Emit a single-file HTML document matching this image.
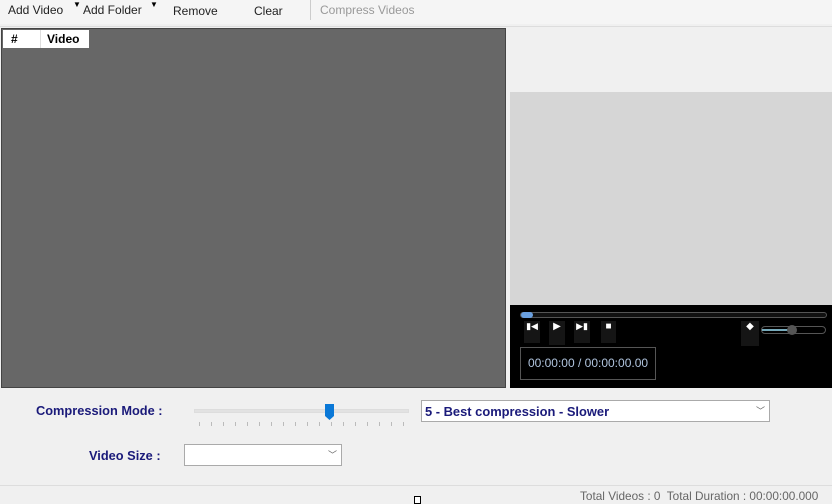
<!DOCTYPE html>
<html><head><meta charset="utf-8"><style>
*{margin:0;padding:0;box-sizing:border-box}
body{width:832px;height:504px;background:#f0f0f0;font-family:"Liberation Sans",sans-serif;position:relative;overflow:hidden;font-size:12px}
.a{position:absolute}
.tb{font-size:12px;color:#222;top:3px}
</style></head><body>
<div class="a" style="left:0;top:0;width:832px;height:24px;background:#f5f5f5"></div>
<div class="a tb" style="left:8px">Add Video</div>
<div class="a" style="left:73px;top:0;font-size:8px">▼</div>
<div class="a tb" style="left:83px">Add Folder</div>
<div class="a" style="left:150px;top:0;font-size:8px">▼</div>
<div class="a tb" style="left:173px;top:4px">Remove</div>
<div class="a tb" style="left:254px;top:4px">Clear</div>
<div class="a" style="left:310px;top:0;width:1px;height:20px;background:#ccc"></div>
<div class="a tb" style="left:320px;color:#999">Compress Videos</div>
<div class="a" style="left:0;top:26px;width:832px;height:1px;background:#ddd"></div>
<div class="a" style="left:1px;top:28px;width:505px;height:360px;background:#676767;border:1px solid #444"></div>
<div class="a" style="left:3px;top:30px;width:86px;height:18px;background:#fff;font-weight:bold;font-size:12px">
<span class="a" style="left:8px;top:2px">#</span><span class="a" style="left:37px;top:0;width:1px;height:18px;background:#ddd"></span><span class="a" style="left:44px;top:2px">Video</span></div>
<div class="a" style="left:510px;top:92px;width:322px;height:213px;background:#d6d6d6"></div>
<div class="a" style="left:510px;top:305px;width:322px;height:83px;background:#000"></div>
<div class="a" style="left:520px;top:312px;width:307px;height:6px;border:1px solid #555;border-radius:3px;background:#111"></div>
<div class="a" style="left:521px;top:312px;width:12px;height:6px;background:#6aa0e0;border-radius:3px"></div>
<div class="a" style="left:524px;top:321px;width:16px;height:22px;background:#151515;color:#fff;font-size:9px;text-align:center">▮◀</div>
<div class="a" style="left:549px;top:321px;width:16px;height:24px;background:#151515;color:#fff;font-size:10px;text-align:center">▶</div>
<div class="a" style="left:574px;top:321px;width:16px;height:22px;background:#151515;color:#fff;font-size:9px;text-align:center">▶▮</div>
<div class="a" style="left:601px;top:321px;width:15px;height:22px;background:#151515;color:#fff;font-size:10px;text-align:center">■</div>
<div class="a" style="left:741px;top:321px;width:18px;height:25px;background:#151515;color:#fff;font-size:10px;text-align:center">◆</div>
<div class="a" style="left:761px;top:326px;width:65px;height:8px;border:1px solid #555;border-radius:4px"></div>
<div class="a" style="left:762px;top:329px;width:28px;height:2px;background:#7ab"></div>
<div class="a" style="left:787px;top:325px;width:10px;height:10px;border-radius:5px;background:#555"></div>
<div class="a" style="left:520px;top:347px;width:136px;height:33px;border:1px solid #555;color:#b0c4de;font-size:12px;text-align:center;line-height:31px">00:00:00 / 00:00:00.00</div>
<div class="a" style="left:36px;top:403px;color:#1a1a7a;font-weight:bold;font-size:12.8px">Compression Mode :</div>
<div class="a" style="left:194px;top:409px;width:215px;height:4px;background:#e2e2e2;border:1px solid #ddd"></div>
<div class="a" style="left:325px;top:404px;width:9px;height:16px;background:#0a78d7;clip-path:polygon(0 0,100% 0,100% 75%,50% 100%,0 75%)"></div>
<div class="a" style="left:199px;top:422px;width:210px;height:4px;background:repeating-linear-gradient(90deg,#bbb 0 1px,transparent 1px 12px)"></div>
<div class="a" style="left:421px;top:400px;width:349px;height:22px;background:#fff;border:1px solid #aaa;color:#1a1a7a;font-weight:bold;padding:3px 3px;font-size:12.9px">5 - Best compression - Slower<span class="a" style="right:4px;top:3px;color:#666;font-weight:normal;font-size:9px">﹀</span></div>
<div class="a" style="left:89px;top:448px;color:#1a1a7a;font-weight:bold;font-size:12.8px">Video Size :</div>
<div class="a" style="left:184px;top:444px;width:158px;height:22px;background:#fff;border:1px solid #aaa"><span class="a" style="right:4px;top:3px;color:#666;font-size:9px">﹀</span></div>
<div class="a" style="left:0;top:485px;width:832px;height:1px;background:#ddd"></div>
<div class="a" style="left:580px;top:489px;font-size:11.8px;color:#666">Total Videos : 0&nbsp; Total Duration : 00:00:00.000</div>
<div class="a" style="left:414px;top:496px;width:7px;height:8px;border:1px solid #000;background:#fff"></div>
</body></html>
